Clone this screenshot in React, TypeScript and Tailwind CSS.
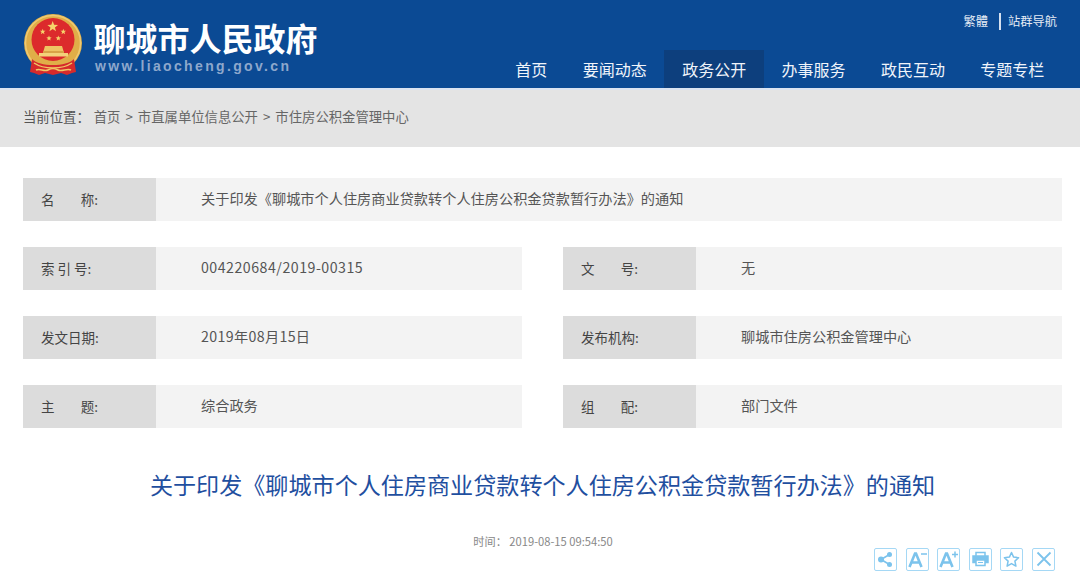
const FONT = "font-['Microsoft_YaHei','Noto_Sans_CJK_SC','Liberation_Sans',sans-serif]";

const NAV = ["首页", "要闻动态", "政务公开", "办事服务", "政民互动", "专题专栏"];

function Star({ x, y, r }: { x: number; y: number; r: number }) {
  const pts = [];
  for (let i = 0; i < 10; i++) {
    const a = (Math.PI / 5) * i - Math.PI / 2;
    const d = i % 2 === 0 ? r : r * 0.42;
    pts.push(`${(x + d * Math.cos(a)).toFixed(2)},${(y + d * Math.sin(a)).toFixed(2)}`);
  }
  return <polygon points={pts.join(" ")} fill="#f6d36b" />;
}

// national emblem, simplified
function Emblem() {
  return (
    <svg width="60" height="64" viewBox="0 0 60 64" className="block">
      <circle cx="29" cy="30" r="29" fill="#e0ae48" />
      <circle cx="29" cy="30" r="27.500" fill="none" stroke="#efca72" strokeWidth="1.500" />
      <circle cx="29" cy="26.500" r="21.500" fill="#dc2a2c" />
      <Star x={28.700} y={13.700} r={5.600} />
      <Star x={18.700} y={18.700} r={3} />
      <Star x={39.300} y={18.700} r={3} />
      <Star x={25} y={25.300} r={2.800} />
      <Star x={34.300} y={25.300} r={2.800} />
      <path d="M21 33h17l1.500 5h-20z" fill="#eec463" />
      <path d="M19 38h21v2H19z" fill="#d9a347" />
      <path d="M15 40h29v3.500H15z" fill="#f3d27a" />
      <path d="M8 46c4 4 12 6 21 6s17-2 21-6l2 13-4 1-5 2-6-2-8 2-8-2-6 2-5-2-4-1z" fill="#d62a2b" />
      <path d="M10 50c6 4 12 5 19 5s13-1 19-5" fill="none" stroke="#f0c765" strokeWidth="1.500" />
      <path d="M12 57c4-2 8 2 12 0s6-2 10 0 9-2 13 0" fill="none" stroke="#f0c765" strokeWidth="1.600" />
    </svg>
  );
}

function IconBox({ children }: { children: React.ReactNode }) {
  return (
    <div className="flex h-[23px] w-[23px] items-center justify-center rounded-[2px] border border-[#a5d8f5] text-[#7cc3ec]">
      {children}
    </div>
  );
}

function ActionIcons() {
  return (
    <div className="-mt-[1px] flex items-center justify-end gap-[8.600px] pr-[25px]">
      <IconBox>
        <svg width="17" height="17" viewBox="0 0 17 17" fill="currentColor">
          <circle cx="12.500" cy="3.500" r="2.500" />
          <circle cx="4" cy="8.500" r="3" />
          <circle cx="12.500" cy="13.500" r="2.500" />
          <path d="M4 8.500 12.500 3.500M4 8.500l8.500 5" stroke="currentColor" strokeWidth="1.600" />
        </svg>
      </IconBox>
      <IconBox>
        <svg width="19" height="17" viewBox="0 0 19 17" fill="none" stroke="currentColor">
          <path d="M1.500 16 7 2.500h1L13.500 16M3.500 11.500h8" strokeWidth="2.600" />
          <path d="M13 3h6" strokeWidth="1.500" />
        </svg>
      </IconBox>
      <IconBox>
        <svg width="19" height="17" viewBox="0 0 19 17" fill="none" stroke="currentColor">
          <path d="M1.500 16 7 2.500h1L13.500 16M3.500 11.500h8" strokeWidth="2.600" />
          <path d="M13 3.500h6M16 .5v6" strokeWidth="1.500" />
        </svg>
      </IconBox>
      <IconBox>
        <svg width="17" height="16" viewBox="0 0 17 16" fill="none" stroke="currentColor">
          <path d="M4 5V1.500h9V5" strokeWidth="1.500" />
          <path d="M4 11.500H1V5h15v6.500h-3" strokeWidth="1.500" fill="currentColor" />
          <path d="M4 9h9v5.500H4z" strokeWidth="1.500" fill="white" />
          <path d="M6 11.500h5" strokeWidth="1" />
        </svg>
      </IconBox>
      <IconBox>
        <svg width="17" height="17" viewBox="0 0 17 17" fill="none" stroke="currentColor" strokeWidth="1.500" strokeLinejoin="round">
          <path d="M8.500 1.500l2.100 4.600 5 .6-3.700 3.400 1 5-4.400-2.500-4.400 2.500 1-5L1.400 6.700l5-.6z" />
        </svg>
      </IconBox>
      <IconBox>
        <svg width="16" height="16" viewBox="0 0 16 16" fill="none" stroke="currentColor" strokeWidth="1.800">
          <path d="M1.500 1.500l13 13M14.500 1.500l-13 13" />
        </svg>
      </IconBox>
    </div>
  );
}

function InfoCell({
  label,
  value,
  className = "",
  valueClass = "",
}: {
  label: string[];
  value: string;
  className?: string;
  valueClass?: string;
}) {
  return (
    <div className={`flex h-[42.500px] items-center bg-[#f3f3f3] ${className}`}>
      <div className="flex h-full w-[133px] shrink-0 items-center bg-[#dcdcdc] pb-[1px] pl-[18px] text-[13.500px] text-[#444]">
        <div className="flex w-[57px] justify-between whitespace-pre">
          {label.map((part) => (
            <span key={part}>{part}</span>
          ))}
        </div>
      </div>
      <div className={`pb-[1px] pl-[45px] text-[#555] ${valueClass}`}>{value}</div>
    </div>
  );
}

export default function App() {
  return (
    <div className={`h-[582px] w-[1080px] overflow-hidden bg-white ${FONT}`}>
      <header className="flex h-[88px] justify-between bg-[#0b4a94]">
        <div className="flex items-start pl-[24px] pt-[13px]">
          <Emblem />
          <div className="pl-[9.500px] pt-[5px]">
            <div className="text-[32px] leading-[38px] font-bold text-white">聊城市人民政府</div>
            <div className="pt-[2px] pl-[1.500px] font-['Liberation_Sans',sans-serif] text-[14px] leading-[16px] font-bold tracking-[2.350px] text-[#8ea8cc]">
              www.liaocheng.gov.cn
            </div>
          </div>
        </div>
        <div className="flex flex-col items-end">
          <div className="flex h-[50px] items-start pt-[13px] pr-[23px] text-[12.250px] leading-[16px] text-[#e4ebf5]">
            <span>繁體</span>
            <span className="mr-[7px] ml-[11px] h-[17px] w-[2px] bg-[#d5e0ef]" />
            <span>站群导航</span>
          </div>
          <nav className="flex h-[38px] pr-[18px] text-[16px] text-[#f0f4fa]">
            {NAV.map((item) => (
              <div
                key={item}
                className={`flex items-center px-[17.700px] pb-[1px] ${item === "政务公开" ? "bg-[#0d3f7d]" : ""}`}
              >
                {item}
              </div>
            ))}
          </nav>
        </div>
      </header>
      <div className="h-[2px] bg-[#dbe4f1]" />
      <div className="flex h-[57px] items-center bg-[#e4e4e4] pb-[2px] pl-[23px] text-[13.350px] text-[#666]">
        <span className="text-[#555]">当前位置：</span>
        <span className="pl-[4px]">首页</span>
        <span className="px-[5px]">&gt;</span>
        <span>市直属单位信息公开</span>
        <span className="px-[5px]">&gt;</span>
        <span>市住房公积金管理中心</span>
      </div>
      <main className="pt-[31px] pr-[18px] pl-[23px]">
        <div className="grid grid-cols-2 gap-x-[41px] gap-y-[26.500px] text-[14.200px]">
          <InfoCell
            className="col-span-2"
            label={["名", "称:"]}
            value="关于印发《聊城市个人住房商业贷款转个人住房公积金贷款暂行办法》的通知"
          />
          <InfoCell label={["索 引 号:"]} value="004220684/2019-00315" valueClass="tracking-[0.500px]" />
          <InfoCell label={["文", "号:"]} value="无" />
          <InfoCell label={["发文日期:"]} value="2019年08月15日" valueClass="tracking-[0.350px]" />
          <InfoCell label={["发布机构:"]} value="聊城市住房公积金管理中心" />
          <InfoCell label={["主", "题:"]} value="综合政务" />
          <InfoCell label={["组", "配:"]} value="部门文件" />
        </div>
      </main>
      <h1 className="pt-[39px] pl-[5px] text-center text-[23.100px] leading-[34px] text-[#1f4f9f]">
        关于印发《聊城市个人住房商业贷款转个人住房公积金贷款暂行办法》的通知
      </h1>
      <div className="pt-[32px] pl-[6px] text-center text-[11.200px] leading-[16px] text-[#888]">时间：&nbsp;2019-08-15 09:54:50</div>
      <ActionIcons />
    </div>
  );
}
